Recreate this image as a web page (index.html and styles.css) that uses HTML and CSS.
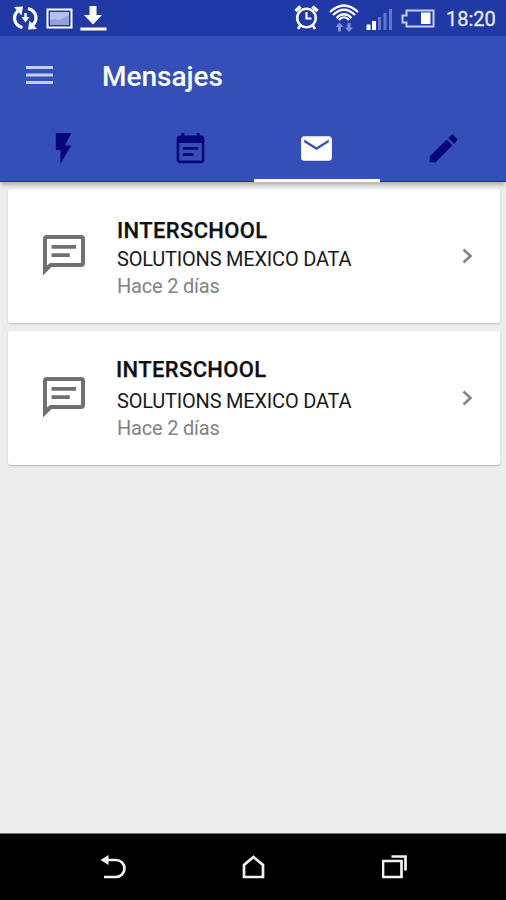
FILE: index.html
```html
<!DOCTYPE html>
<html lang="es">
<head>
<meta charset="utf-8">
<title>Mensajes</title>
<link rel="stylesheet" href="styles.css">
</head>
<body>
<div class="screen">
  <div class="status">
    <svg class="status-icons" width="120" height="36" viewBox="0 0 120 36" fill="none" stroke="#fff">
      <g stroke-width="3.200">
        <path d="M22.500 27.500C13 25 12.500 15 18.500 10.500M28 8.500C37.500 11 38 21 32 25.500"/>
        <path d="M14 7l9-.5-1.500 9zM37 29l-9 .5 1.500-9z" fill="#fff" stroke="none"/>
        <path d="M25.500 13v6" stroke-width="2.500"/>
        <path d="M21.500 17h8l-4 5.500z" fill="#fff" stroke="none"/>
      </g>
      <rect x="47.500" y="9.500" width="24" height="18" stroke-width="2"/>
      <rect x="50" y="12" width="19" height="13" fill="#b4c2ea" stroke="none"/>
      <path d="M50 20l5-1 4 1 4-2 6-3v10H50z" fill="#93a3da" stroke="none"/>
      <path d="M89.500 6h7v9h5.500l-9 9.500-9-9.500h5.500zM80.500 27.500h26v3h-26z" fill="#fff" stroke="none"/>
    </svg>
    <svg class="status-icons" width="146" height="36" viewBox="290 0 146 36" fill="none" stroke="#fff">
      <circle cx="306.500" cy="18" r="9.300" stroke-width="2.600"/>
      <path d="M306.500 12v6.500h5" stroke-width="2.200"/>
      <path d="M295.500 11l5-4.500M317.500 11l-5-4.500" stroke-width="3.500"/>
      <path d="M300.500 25l-2.500 4M312.500 25l2.500 4" stroke-width="2.500"/>
      <g stroke-width="2.200">
        <path d="M330 12Q344 -1 358 12M333 15Q344 4.500 355 15M336.500 18Q344 10.500 351.500 18"/>
        <path d="M339 20Q344 14.500 349 20" />
      </g>
      <path d="M339.500 22.500l4 4.500h-2.500v4.500h-3V27h-2.500zM349 32l-4-4.500h2.500v-4.500h3v4.500h2.500z" fill="#8190d2" stroke="none"/>
      <path d="M366.500 24.500h4V30h-4zM372 21h4v9h-4z" fill="#fff" stroke="none"/>
      <path d="M378 17h3v13h-3zM383.500 13h3v17h-3zM389 9h3v21h-3z" fill="#6376c9" stroke="none"/>
      <path d="M406.500 10.500h27v16h-27v-4h-4v-7h4z" stroke="#c6cff3" stroke-width="2"/>
      <path d="M421 12.500h9.500v11.500H421z" fill="#fff" stroke="none"/>
    </svg>
    <span class="clock">18:20</span>
  </div>
  <header class="appbar">
    <svg class="menu" width="27" height="20" viewBox="0 0 27 20" fill="#c3cdf2"><path d="M0 1h27v3H0zM0 8.500h27v3H0zM0 16h27v3H0z"/></svg>
    <h1 class="title">Mensajes</h1>
  </header>
  <nav class="tabs">
    <div class="tab"><svg viewBox="0 0 24 24"><path d="M7 2v11h3v9l7-12h-4l4-8z"/></svg></div>
    <div class="tab"><svg viewBox="0 0 24 24"><path fill-rule="evenodd" d="M19 3.500h-1V2h-2v1.500H8V2H6v1.500H5c-1.110 0-2 .9-2 2V19.500c0 1.100.89 2 2 2h14c1.100 0 2-.9 2-2V5.500c0-1.100-.9-2-2-2zm.3 16.300H4.700V8.500h14.600zM7 11h10v1.800H7zM7 15h7v1.800H7z"/></svg></div>
    <div class="tab active"><svg viewBox="0 0 24 24"><path d="M20 4H4c-1.100 0-1.990.9-1.990 2L2 18c0 1.100.9 2 2 2h16c1.100 0 2-.9 2-2V6c0-1.100-.9-2-2-2zm0 4l-8 5-8-5V6.200l8 5 8-5v1.800z"/></svg></div>
    <div class="tab"><svg viewBox="0 0 24 24"><path d="M3 17.250V21h3.750L17.810 9.940l-3.750-3.750L3 17.250zM20.710 7.040c.39-.39.39-1.020 0-1.410l-2.340-2.340c-.39-.39-1.020-.39-1.410 0l-1.830 1.830 3.750 3.750 1.830-1.830z"/></svg></div>
  </nav>
  <main class="list">
    <article class="card">
      <svg class="chat" width="42" height="42" viewBox="0 0 42 42"><path fill-rule="evenodd" d="M4 0h34a4 4 0 0 1 4 4v24a4 4 0 0 1-4 4H8.500L0 40.500V4a4 4 0 0 1 4-4zm0 4v26.500L7 28h31V4z"/><path d="M8.500 10H33v3.700H8.500zM8.500 18.200h18.300v3.700H8.500z"/></svg>
      <div class="text">
        <h2 class="sender">INTERSCHOOL</h2>
        <p class="subject">SOLUTIONS MEXICO DATA</p>
        <p class="time">Hace 2 días</p>
      </div>
      <svg class="chevron" width="11" height="16" viewBox="0 0 11 16"><path d="M1.500 1.500L8.500 8l-7 6.500"/></svg>
    </article>
    <article class="card second">
      <svg class="chat" width="42" height="42" viewBox="0 0 42 42"><path fill-rule="evenodd" d="M4 0h34a4 4 0 0 1 4 4v24a4 4 0 0 1-4 4H8.500L0 40.500V4a4 4 0 0 1 4-4zm0 4v26.500L7 28h31V4z"/><path d="M8.500 10H33v3.700H8.500zM8.500 18.200h18.300v3.700H8.500z"/></svg>
      <div class="text">
        <h2 class="sender">INTERSCHOOL</h2>
        <p class="subject">SOLUTIONS MEXICO DATA</p>
        <p class="time">Hace 2 días</p>
      </div>
      <svg class="chevron" width="11" height="16" viewBox="0 0 11 16"><path d="M1.500 1.500L8.500 8l-7 6.500"/></svg>
    </article>
  </main>
  <footer class="navbar">
    <svg width="26" height="26" viewBox="0 0 26 26"><path d="M5 5h11a8.500 8.500 0 0 1 0 17H4"/><path class="solid" d="M.5 5l8-5v10z"/></svg>
    <svg width="26" height="26" viewBox="0 0 26 26"><path d="M3 22V10l9.500-8 9.500 8v12z"/></svg>
    <svg width="26" height="26" viewBox="0 0 26 26"><path d="M1 6h18.500v16H1zM9.500 1.500h14v14"/></svg>
  </footer>
</div>
</body>
</html>
```

FILE: styles.css
```css
* { box-sizing: border-box; }
body, h1, h2, p { margin: 0; }
body { font-family: Roboto, "Liberation Sans", sans-serif; background: #eee; }
svg { display: block; flex: none; }

.screen { width: 506px; height: 900px; display: flex; flex-direction: column; background: #ededed; }

.status { height: 36px; flex: none; display: flex; justify-content: space-between; background: #2039a4; color: #e8ebfa; }
.status-icons:nth-child(2) { margin-left: auto; margin-right: 10px; }
.clock { width: 60px; font-size: 20px; line-height: 38px; -webkit-text-stroke: 0.3px #e8ebfa; }

.appbar { height: 79px; flex: none; display: flex; align-items: center; gap: 49px; padding-left: 26px; background: #3450b8; }
.menu { margin-bottom: 2px; }
.title { font-size: 28px; line-height: 32px; font-weight: 500; color: #fff; padding-top: 2px; }

.tabs { height: 67px; flex: none; display: grid; grid-template-columns: repeat(4, 1fr); background: #3450b8; border-bottom: 1px solid #0d35a9; box-shadow: 0 4px 4px -1px rgba(0, 0, 0, .25); }
.tab { display: flex; justify-content: center; padding: 15px 0 0 1px; }
.tab svg { width: 37px; height: 37px; fill: #05067b; }
.tab.active { border-bottom: 3px solid #fff; margin: 0 0 -1px 1px; padding-left: 0; }
.tab.active svg { fill: #fff; }

.list { flex: 1; display: flex; flex-direction: column; gap: 8px; padding: 7px 6px 0 8px; }
.card { height: 134px; display: flex; align-items: center; padding: 0 27px 0 35px; background: #fff; border-radius: 3px; box-shadow: 0 1px 2px rgba(0, 0, 0, .22); }
.chat { fill: #707070; }
.text { flex: 1; margin-left: 32px; padding-top: 3px; }
.sender { font-size: 22px; line-height: 30px; font-weight: 500; letter-spacing: 0.35px; color: #111; -webkit-text-stroke: 0.25px #111; }
.subject { font-size: 20px; line-height: 27px; letter-spacing: -0.2px; color: #1a1a1a; white-space: nowrap; }
.time { font-size: 20px; line-height: 27px; letter-spacing: -0.2px; color: #828282; }
.second .sender { margin: -3px 0 3px -1px; }
.chevron { fill: none; stroke: #858585; stroke-width: 2.6; }

.navbar { height: 67px; flex: none; display: flex; justify-content: center; gap: 115px; padding: 21px 0 0 1px; background: #000; border-top: 1px solid #777; }
.navbar path { fill: none; stroke: #f2f2f2; stroke-width: 2.7; }
.navbar .solid { fill: #f2f2f2; stroke: none; }
```
